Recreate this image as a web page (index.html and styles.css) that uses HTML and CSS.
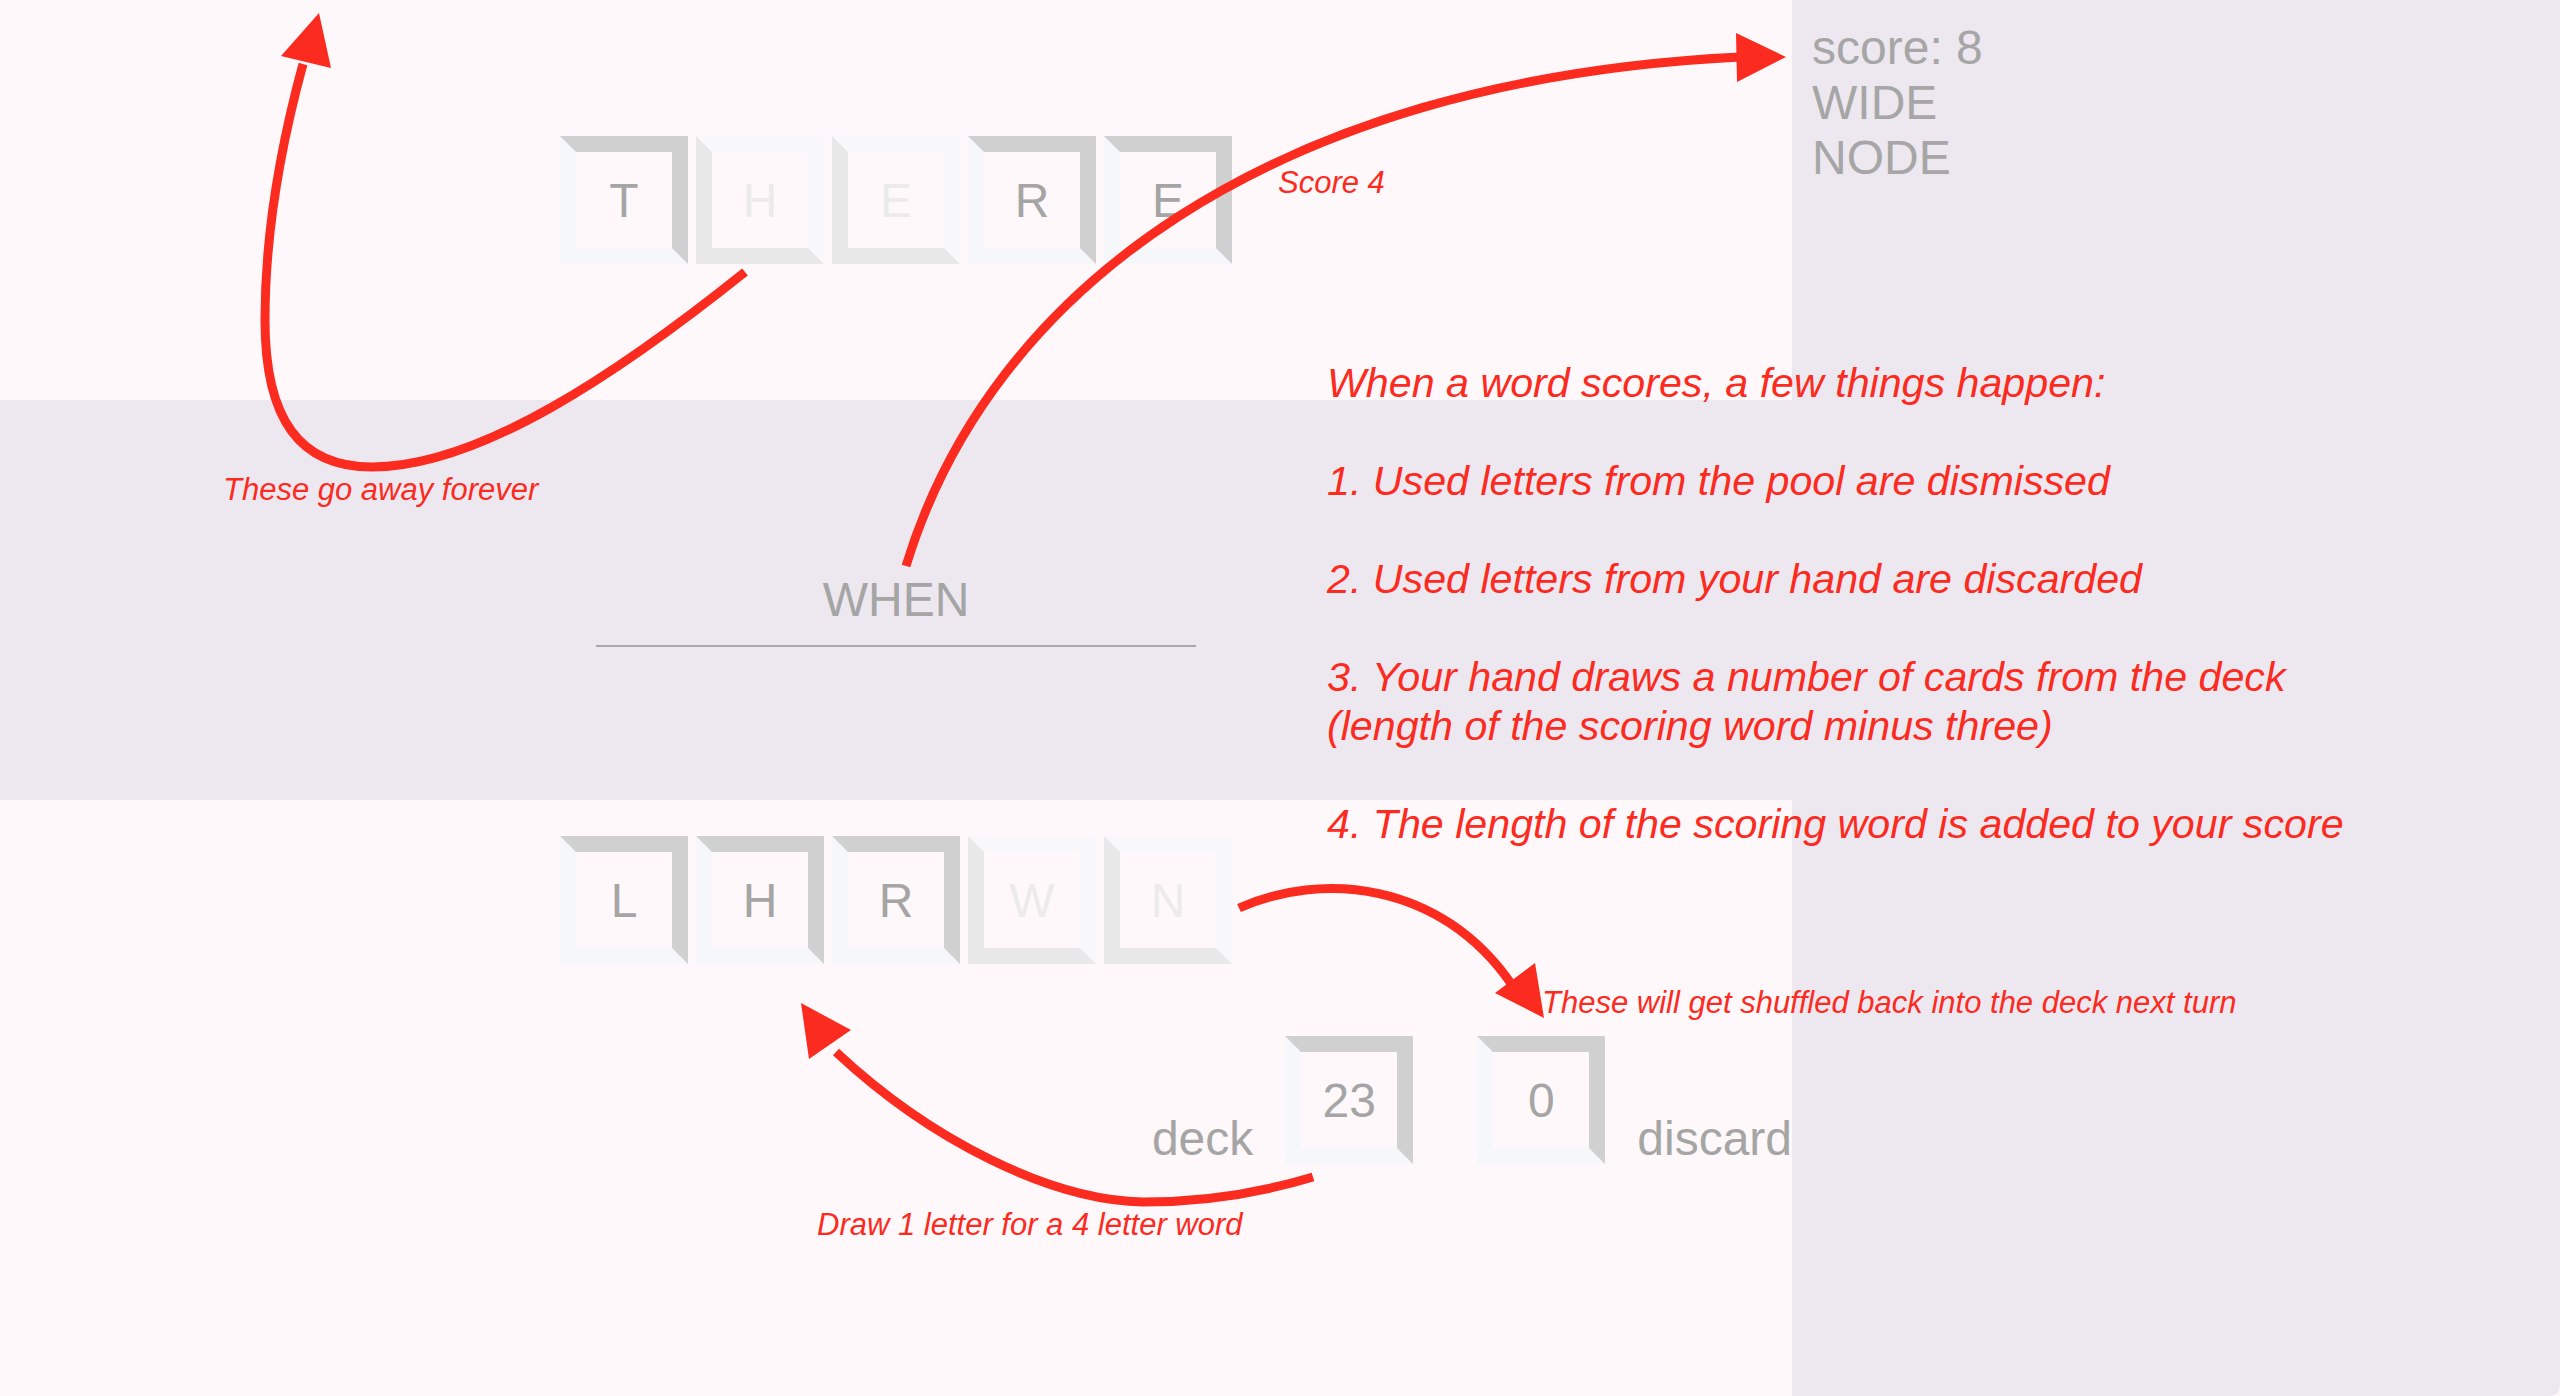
FILE: index.html
```html
<!DOCTYPE html>
<html lang="en">
<head>
<meta charset="utf-8">
<title>Word game – scoring</title>
<link rel="stylesheet" href="styles.css">
</head>
<body>
<div class="app">
  <main class="board">
    <section class="pool">
      <div class="tile">T</div>
      <div class="tile used">H</div>
      <div class="tile used">E</div>
      <div class="tile">R</div>
      <div class="tile">E</div>
    </section>
    <section class="entry">
      <div class="word">WHEN</div>
    </section>
    <section class="hand">
      <div class="tiles">
        <div class="tile">L</div>
        <div class="tile">H</div>
        <div class="tile">R</div>
        <div class="tile used">W</div>
        <div class="tile used">N</div>
      </div>
      <div class="piles">
        <span class="pile-label">deck</span>
        <div class="tile card">23</div>
        <div class="tile card">0</div>
        <span class="pile-label">discard</span>
      </div>
    </section>
  </main>
  <aside class="side">
    <div>score: 8</div>
    <div>WIDE</div>
    <div>NODE</div>
  </aside>

  <svg class="arrows" width="2560" height="1396" viewBox="0 0 2560 1396" aria-hidden="true">
    <g fill="none" stroke="#fb2b1f" stroke-width="9">
      <path d="M745 272 C620 372 480 467 372 467 C300 467 265 420 265 320 C265 220 285 130 303 64"/>
      <path d="M906 566 C990 290 1270 80 1740 57"/>
      <path d="M1239 908 C1320 872 1440 880 1512 985"/>
      <path d="M1313 1177 C1260 1193 1200 1202 1143 1202 C1050 1200 930 1140 836 1052"/>
    </g>
    <g fill="#fb2b1f">
      <polygon points="319,13 281,56 331,68"/>
      <polygon points="1786,57 1736,33 1737,82"/>
      <polygon points="1544,1018 1535,963 1495,993"/>
      <polygon points="801,1003 851,1030 809,1059"/>
    </g>
  </svg>

  <p class="note note-score">Score 4</p>
  <p class="note note-forever">These go away forever</p>
  <p class="note note-shuffle">These will get shuffled back into the deck next turn</p>
  <p class="note note-draw">Draw 1 letter for a 4 letter word</p>
  <p class="note note-rules">When a word scores, a few things happen:<br><br>1. Used letters from the pool are dismissed<br><br>2. Used letters from your hand are discarded<br><br>3. Your hand draws a number of cards from the deck<br>(length of the scoring word minus three)<br><br>4. The length of the scoring word is added to your score</p>
</div>
</body>
</html>
```

FILE: styles.css
```css
html, body {
  margin: 0;
  padding: 0;
}

body {
  background: #fff8fa;
  font-family: "Liberation Sans", Arial, sans-serif;
  color: #a5a5a5;
}

.app {
  position: relative;
  display: flex;
  width: 2560px;
  height: 1396px;
  overflow: hidden;
}

.board {
  flex: 0 0 1792px;
  display: flex;
  flex-direction: column;
}

.pool {
  height: 400px;
  display: flex;
  justify-content: center;
  align-items: center;
  gap: 8px;
}

.tile {
  box-sizing: border-box;
  width: 128px;
  height: 128px;
  border: 16px solid;
  border-color: #d0d0d0 #d0d0d0 #f5f7fb #f5f7fb;
  display: flex;
  align-items: center;
  justify-content: center;
  font-size: 48px;
  color: #a5a5a5;
}

.tile.used {
  border-color: #f8f8fb #f8f8fb #e8e8e8 #e8e8e8;
  color: #ebebeb;
}

.entry {
  height: 400px;
  background: #ede8f0;
  display: flex;
  justify-content: center;
  align-items: center;
}

.word {
  width: 600px;
  padding: 18px 0;
  border-bottom: 2px solid #a8a8a8;
  text-align: center;
  font-size: 48px;
  color: #a5a5a5;
}

.hand {
  padding-top: 36px;
  display: flex;
  flex-direction: column;
}

.tiles {
  display: flex;
  justify-content: center;
  gap: 8px;
}

.piles {
  margin-top: 72px;
  display: flex;
  justify-content: flex-end;
  align-items: flex-end;
}

.card {
  margin: 0 32px;
}

.pile-label {
  font-size: 48px;
  line-height: 50px;
  color: #a5a5a5;
}

.side {
  flex: 1 1 auto;
  background: #ede8f0;
  padding: 20px;
  font-size: 48px;
  color: #a6a6a6;
  border-bottom-right-radius: 10px;
}

.arrows {
  position: absolute;
  left: 0;
  top: 0;
  pointer-events: none;
}

.note {
  position: absolute;
  margin: 0;
  font-style: italic;
  color: #fb2b1f;
  font-size: 31px;
  line-height: 35px;
  white-space: nowrap;
}

.note-score {
  left: 1278px;
  top: 165px;
}

.note-forever {
  left: 223px;
  top: 472px;
}

.note-shuffle {
  left: 1542px;
  top: 985px;
}

.note-draw {
  left: 817px;
  top: 1207px;
}

.note-rules {
  left: 1327px;
  top: 359px;
  font-size: 41.2px;
  line-height: 49px;
}
```
